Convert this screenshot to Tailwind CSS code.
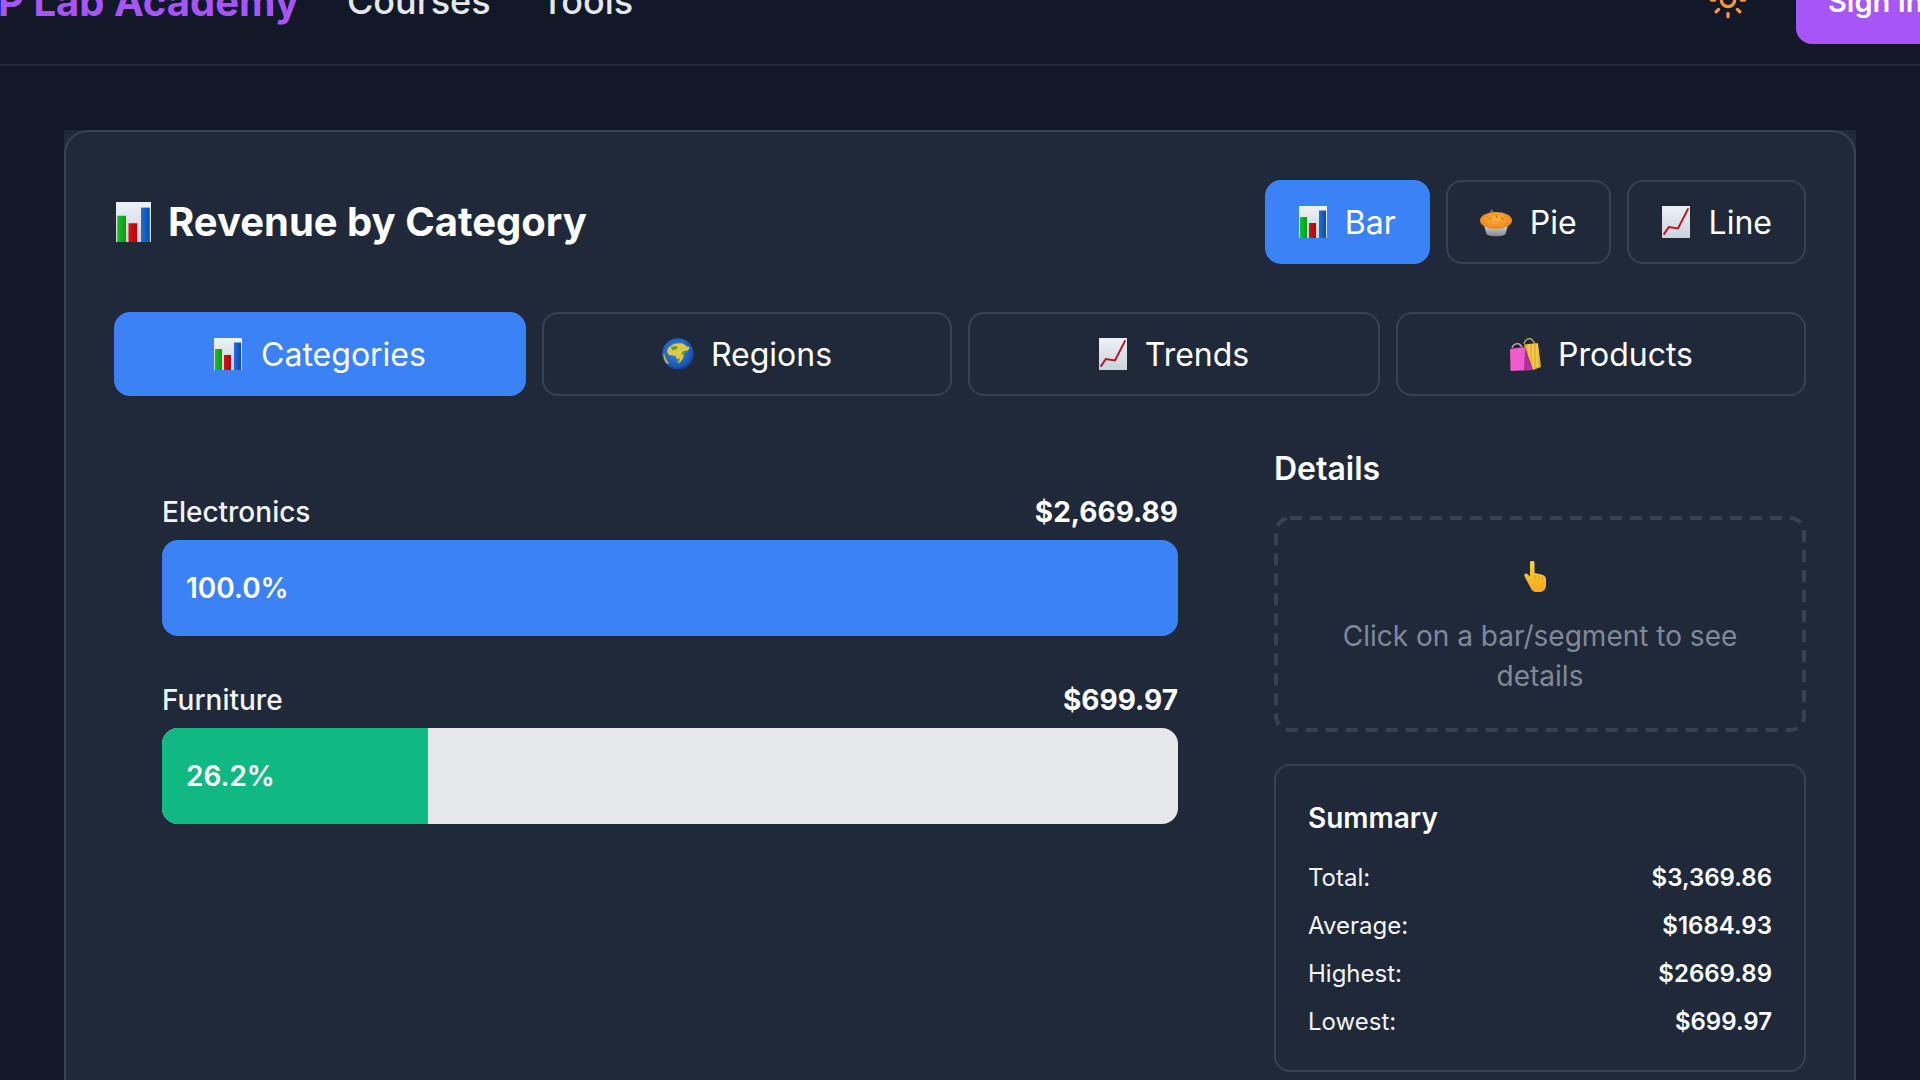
<!DOCTYPE html>
<html lang="en">
<head>
<meta charset="utf-8">
<title>Revenue by Category</title>
<script src="https://cdn.jsdelivr.net/npm/@tailwindcss/browser@4"></script>
</head>
<body class="h-screen overflow-hidden bg-[#111827] text-white font-['Inter',sans-serif]">
<svg width="0" height="0" class="absolute">
  <defs>
    <linearGradient id="paper" x1="0" y1="0" x2="0" y2="1"><stop offset="0" stop-color="#eef2f7"/><stop offset="1" stop-color="#c9d2dd"/></linearGradient>
    <linearGradient id="gb" x1="0" y1="0" x2="1" y2="0"><stop offset="0" stop-color="#12c22a"/><stop offset="1" stop-color="#0b9a1f"/></linearGradient>
    <linearGradient id="rb" x1="0" y1="0" x2="1" y2="0"><stop offset="0" stop-color="#d80f14"/><stop offset="1" stop-color="#a90a0f"/></linearGradient>
    <linearGradient id="bb" x1="0" y1="0" x2="1" y2="0"><stop offset="0" stop-color="#1e6fe0"/><stop offset="1" stop-color="#0b4aa6"/></linearGradient>
    <radialGradient id="ocean" cx="0.45" cy="0.4" r="0.65"><stop offset="0" stop-color="#3f8fe8"/><stop offset="0.75" stop-color="#1c56b4"/><stop offset="1" stop-color="#0e2f70"/></radialGradient>
    <radialGradient id="crust" cx="0.5" cy="0.4" r="0.7"><stop offset="0" stop-color="#fbb040"/><stop offset="1" stop-color="#e87c14"/></radialGradient>
    <linearGradient id="dish" x1="0" y1="0" x2="0" y2="1"><stop offset="0" stop-color="#e8e8e8"/><stop offset="1" stop-color="#85878c"/></linearGradient>
    <linearGradient id="hand" x1="0" y1="0" x2="0" y2="1"><stop offset="0" stop-color="#fed23e"/><stop offset="1" stop-color="#f4aa1c"/></linearGradient>
    <symbol id="e-bar" viewBox="0 0 28 32">
      <rect width="28" height="32" fill="url(#paper)"/>
      <rect x="1" y="11" width="7" height="21" fill="url(#gb)"/>
      <rect x="10" y="17" width="7" height="15" fill="url(#rb)"/>
      <rect x="20" y="4.5" width="7" height="27.5" fill="url(#bb)"/>
    </symbol>
    <symbol id="e-line" viewBox="0 0 28 32">
      <rect width="28" height="32" fill="url(#paper)"/>
      <path d="M1.7 28.6 6.8 21l9.2 1.5L26.3 2.4" fill="none" stroke="#bf1420" stroke-width="2"/>
    </symbol>
    <symbol id="e-globe" viewBox="0 0 32 32">
      <circle cx="16" cy="16" r="15.8" fill="url(#ocean)"/>
      <path d="M8 8.500c3-3 8-4 13-3l4 3 3 1-2 3-3 1-1 3-1 4-3 4-2 1-1-4-1-3-3-1-4-.5-2-3 1-4Z" fill="#dcc94a"/>
      <path d="M9 9l5-1 2 2-3 2-3 0Zm11 5 4-2-2 5-2 0Zm-5 7 3-1-1 5-2 0Z" fill="#5d9a35"/>
      <path d="M2 15c1 4 2 7 5 10l-1 1c-3-2-5-6-4.300-11Z" fill="#c8c238"/>
    </symbol>
    <symbol id="e-pie" viewBox="0 0 32 28">
      <path d="M11 1 13 4" stroke="#7a7f87" stroke-width="2"/>
      <path d="M3 13h26l-3.500 12c-2 3-17 3-19 0Z" fill="url(#dish)"/>
      <ellipse cx="16" cy="11.500" rx="16" ry="8.500" fill="url(#crust)"/>
      <path d="M9 9l3 1m4-4 1 3m4 0 3 1" stroke="#c96a10" stroke-width="1"/>
    </symbol>
    <symbol id="e-bags" viewBox="0 0 32 33">
      <path d="M15 6c1-5 5-6 7-5s3 3 4 5" fill="none" stroke="#c9a15a" stroke-width="1.400"/>
      <path d="M15 6.500 29 5l3 24-8 3Z" fill="#e8b62c"/>
      <path d="M20 6v25M24 6v25M28 6v23" stroke="#f6d566" stroke-width="1.200"/>
      <path d="M3 10c1-4 5-5 7-4s2 2 3 3" fill="none" stroke="#d9a0b8" stroke-width="1.400"/>
      <path d="M1 11 16 9l8 23-22.500 1Z" fill="#f05ccb"/>
      <path d="M16 9l8 23h-9Z" fill="#b02f98"/>
    </symbol>
    <symbol id="e-hand" viewBox="0 0 22 31">
      <path d="M6 2a2.200 2.200 0 0 1 4.500 0v10l7 1.500c3 .6 4.500 2.500 4.500 5v6c0 4-3 6.500-6.500 6.500H12c-2.500 0-4-1.300-5-3.500L.6 15.500c-1.200-2 .8-4 2.600-2.700L6 15.500Z" fill="url(#hand)"/>
      <path d="M11 14v5m4-4.500v5m3.500-4v4" stroke="#e09a18" stroke-width="1"/>
    </symbol>
  </defs>
</svg>

<div class="-mt-[64px]">
  <header class="h-[130px] flex items-center justify-between border-b-2 border-[#1f2937]">
    <nav class="flex items-center mt-[3px]">
      <span class="text-[40px] leading-[56px] font-bold text-[#a855f7] -ml-[2px] whitespace-nowrap">P Lab Academy</span>
      <span class="text-[36px] leading-[56px] font-medium text-[#e5e7eb] ml-[48px] -mt-[2px]">Courses</span>
      <span class="text-[36px] leading-[56px] font-medium text-[#e5e7eb] ml-[50px] -mt-[2px]">Tools</span>
    </nav>
    <div class="flex items-center gap-[48px] -mr-[40px] shrink-0">
      <svg class="w-10 h-10 text-[#fb923c] mb-[1px]" viewBox="0 0 24 24" fill="none" stroke="currentColor" stroke-width="2" stroke-linecap="round" stroke-linejoin="round"><circle cx="12" cy="12" r="4"/><path d="M12 2v2M12 20v2M4.930 4.930l1.410 1.410M17.660 17.660l1.410 1.410M2 12h2M20 12h2M6.340 17.660l-1.410 1.410M19.070 4.930l-1.410 1.410"/></svg>
      <button class="h-[88px] w-[164px] rounded-2xl bg-[#a855f7] text-[29px] font-semibold text-white pl-[32px] pt-[3px] text-left whitespace-nowrap">Sign In</button>
    </div>
  </header>

  <main class="px-16 pt-16">
    <div class="bg-[#1f2939]">
      <section class="rounded-3xl border-2 border-[#374151] bg-[#1f2939] p-12">
        <div class="flex items-center justify-between mb-12">
          <h1 class="flex items-center gap-[17px] text-[40px] leading-[56px] font-bold text-white">
            <svg class="w-[35px] h-10 ml-[2px]"><use href="#e-bar"/></svg>
            Revenue by Category
          </h1>
          <div class="flex gap-4">
            <button class="h-[84px] px-8 flex items-center gap-[18px] rounded-2xl border-2 border-[#3b82f6] bg-[#3b82f6] text-[32px] text-white"><svg class="w-7 h-8"><use href="#e-bar"/></svg><span class="pt-[2px]">Bar</span></button>
            <button class="h-[84px] px-8 flex items-center gap-[18px] rounded-2xl border-2 border-[#374151] text-[32px] text-white"><svg class="w-8 h-7 mt-[2px]"><use href="#e-pie"/></svg><span class="pt-[2px]">Pie</span></button>
            <button class="h-[84px] pl-[33px] pr-8 flex items-center gap-[19px] rounded-2xl border-2 border-[#374151] text-[32px] text-white"><svg class="w-7 h-8"><use href="#e-line"/></svg><span class="pt-[2px]">Line</span></button>
          </div>
        </div>

        <div class="grid grid-cols-[412px_410px_412px_410px] gap-4 mb-12">
          <button class="h-[84px] flex items-center justify-center gap-[19px] rounded-2xl border-2 border-[#3b82f6] bg-[#3b82f6] text-[32px] text-white"><svg class="w-7 h-8"><use href="#e-bar"/></svg><span class="pt-[2px]">Categories</span></button>
          <button class="h-[84px] flex items-center justify-center gap-[17px] rounded-2xl border-2 border-[#374151] text-[32px] text-white"><svg class="w-8 h-8"><use href="#e-globe"/></svg><span class="pt-[2px]">Regions</span></button>
          <button class="h-[84px] flex items-center justify-center gap-[18px] rounded-2xl border-2 border-[#374151] text-[32px] text-white"><svg class="w-7 h-8"><use href="#e-line"/></svg><span class="pt-[2px]">Trends</span></button>
          <button class="h-[84px] flex items-center justify-center gap-[17px] rounded-2xl border-2 border-[#374151] text-[32px] text-white"><svg class="w-8 h-[33px]"><use href="#e-bags"/></svg><span class="pt-[2px]">Products</span></button>
        </div>

        <div class="grid grid-cols-[1fr_532px] gap-12">
          <div class="p-12">
            <div class="mb-[44px]">
              <div class="flex justify-between text-[28px] leading-10 mb-2">
                <span class="font-medium text-[#f3f4f6]">Electronics</span>
                <span class="font-bold">$2,669.89</span>
              </div>
              <div class="h-24 rounded-2xl bg-[#e5e7eb] overflow-hidden">
                <div class="h-full bg-[#3b82f6] flex items-center pl-6 text-[28px] font-semibold" style="width:100%">100.0%</div>
              </div>
            </div>
            <div>
              <div class="flex justify-between text-[28px] leading-10 mb-2">
                <span class="font-medium text-[#f3f4f6]">Furniture</span>
                <span class="font-bold">$699.97</span>
              </div>
              <div class="h-24 rounded-2xl bg-[#e5e7eb] overflow-hidden">
                <div class="h-full bg-[#10b981] flex items-center pl-6 text-[28px] font-semibold" style="width:26.2%">26.2%</div>
              </div>
            </div>
          </div>

          <aside>
            <h2 class="text-[32px] leading-[48px] font-semibold pt-[1px] mb-[23px]">Details</h2>
            <div class="relative p-9 text-center mb-8">
              <svg class="absolute inset-0 w-full h-full" viewBox="0 0 532 216" fill="none"><rect x="2" y="2" width="528" height="212" rx="14" stroke="#374151" stroke-width="4" stroke-dasharray="12 8"/></svg>
              <div class="h-12 flex items-center justify-center mb-4"><svg class="w-[22px] h-[31px] mr-[10px]"><use href="#e-hand"/></svg></div>
              <p class="text-[28px] leading-10 text-[#808999]">Click on a bar/segment to see details</p>
            </div>
            <div class="rounded-2xl border-2 border-[#374151] p-8">
              <h3 class="text-[28px] leading-10 font-semibold mb-6">Summary</h3>
              <div class="flex flex-col gap-4 text-2xl leading-8">
                <div class="flex justify-between"><span class="text-[#f3f4f6]">Total:</span><span class="font-semibold">$3,369.86</span></div>
                <div class="flex justify-between"><span class="text-[#f3f4f6]">Average:</span><span class="font-semibold">$1684.93</span></div>
                <div class="flex justify-between"><span class="text-[#f3f4f6]">Highest:</span><span class="font-semibold">$2669.89</span></div>
                <div class="flex justify-between"><span class="text-[#f3f4f6]">Lowest:</span><span class="font-semibold">$699.97</span></div>
              </div>
            </div>
          </aside>
        </div>
      </section>
    </div>
  </main>
</div>
</body>
</html>
